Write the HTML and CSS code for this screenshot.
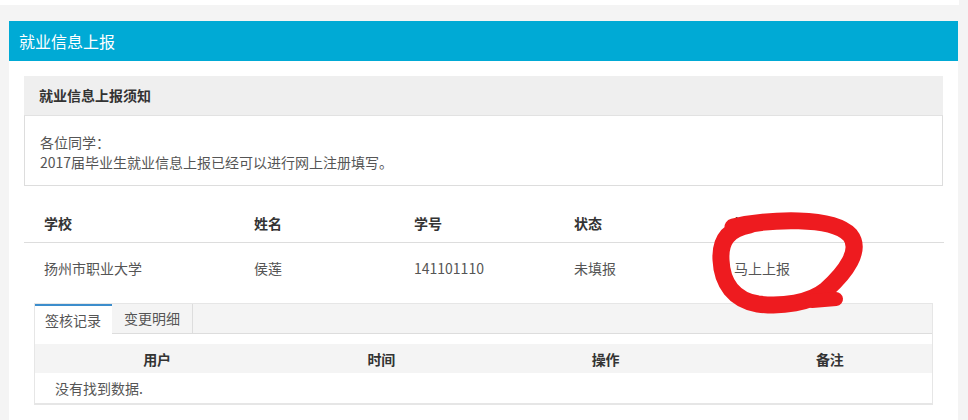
FILE: index.html
```html
<!DOCTYPE html>
<html lang="zh-CN">
<head>
    <meta charset="UTF-8">
    <meta name="viewport" content="width=device-width, initial-scale=1.0">
    <title>就业信息上报</title>
    <link rel="stylesheet" href="styles.css">
</head>
<body>
    <div class="top-strip"></div>

    <div class="panel">
        <div class="panel-heading">就业信息上报</div>
        <div class="panel-body">
            <!-- 上报须知 -->
            <div class="notice">
                <div class="notice-heading">就业信息上报须知</div>
                <div class="notice-body">
                    各位同学：<br>
                    2017届毕业生就业信息上报已经可以进行网上注册填写。
                </div>
            </div>

            <div class="report">
                <table class="info-table">
                    <colgroup>
                        <col style="width: 210px">
                        <col style="width: 160px">
                        <col style="width: 160px">
                        <col style="width: 160px">
                        <col style="width: 230px">
                    </colgroup>
                    <thead>
                        <tr>
                            <th>学校</th>
                            <th>姓名</th>
                            <th>学号</th>
                            <th>状态</th>
                            <th>操作</th>
                        </tr>
                    </thead>
                    <tbody>
                        <tr>
                            <td>扬州市职业大学</td>
                            <td>侯莲</td>
                            <td>141101110</td>
                            <td>未填报</td>
                            <td><a class="report-link" href="#">马上上报</a></td>
                        </tr>
                    </tbody>
                </table>

                <!-- 记录标签页 -->
                <div class="tabs">
                    <div class="tab-bar">
                        <div class="tab active">签核记录</div>
                        <div class="tab">变更明细</div>
                    </div>
                    <div class="tab-content">
                        <table class="log-table">
                            <thead>
                                <tr>
                                    <th>用户</th>
                                    <th>时间</th>
                                    <th>操作</th>
                                    <th>备注</th>
                                </tr>
                            </thead>
                            <tbody>
                                <tr>
                                    <td colspan="4" class="empty">没有找到数据.</td>
                                </tr>
                            </tbody>
                        </table>
                    </div>
                </div>

                <!-- 手绘圈注 -->
                <svg class="mark" width="180" height="120" viewBox="700 200 180 120">
                    <path d="M733 227 C 770 219, 832 216, 850 235 C 862 250, 846 272, 826 290 C 810 303, 782 307, 758 304 C 734 300, 722 283, 721 260 C 720 242, 727 229, 750 225"
                          fill="none" stroke="#ee1b1f" stroke-width="17" stroke-linecap="round" stroke-linejoin="round"/>
                    <path d="M812 301 L 836 299" fill="none" stroke="#ee1b1f" stroke-width="14" stroke-linecap="round"/>
                </svg>
            </div>
        </div>
    </div>
</body>
</html>
```

FILE: styles.css
```css
body {
    margin: 0;
    background-color: #f4f4f4;
    font-family: "Noto Sans CJK SC", "Noto Sans", sans-serif;
    font-size: 14px;
    color: #555;
}
.top-strip {
    width: 959px;
    height: 5px;
    background-color: #fff;
}
.panel {
    width: 949px;
    margin: 16px 0 0 9px;
    background-color: #fff;
    height: 399px;
}
.panel-heading {
    height: 40px;
    line-height: 40px;
    padding-left: 10px;
    background-color: #00aad5;
    color: #fff;
    font-size: 16px;
}
.panel-body {
    padding: 15px 15px 0;
}
.notice-heading {
    height: 39px;
    line-height: 39px;
    padding-left: 15px;
    background-color: #efefef;
    color: #333;
    font-weight: bold;
}
.notice-body {
    border: 1px solid #ddd;
    border-top-color: #e2e2e2;
    padding: 16px 15px 13px;
    line-height: 20px;
}
.report {
    position: relative;
    margin-top: 18px;
}
.info-table {
    width: 920px;
    table-layout: fixed;
    border-collapse: collapse;
}
.info-table th,
.info-table td {
    padding: 0 0 0 20px;
    text-align: left;
}
.info-table th {
    height: 38px;
    color: #333;
    font-weight: bold;
    border-bottom: 1px solid #ddd;
}
.info-table td {
    height: 50px;
}
.report-link {
    color: #555;
    text-decoration: none;
}
.tabs {
    margin: 10px 10px 0;
    border: 1px solid #e6e6e6;
}
.tab-bar {
    display: flex;
    height: 29px;
    background-color: #f4f4f4;
    border-bottom: 1px solid #ddd;
}
.tab {
    line-height: 29px;
    padding: 0 12px;
    border-right: 1px solid #ddd;
}
.tab.active {
    padding: 0 11px 0 10px;
    background-color: #fff;
    border-top: 2px solid #3c8dcc;
    border-right: none;
    line-height: 27px;
    height: 28px;
    margin-bottom: -1px;
    padding-top: 1px;
}
.tab-content {
    padding-top: 10px;
}
.log-table {
    width: 100%;
    table-layout: fixed;
    border-collapse: collapse;
}
.log-table th {
    height: 29px;
    padding: 0 0 0 20px;
    background-color: #f4f4f4;
    color: #333;
    font-weight: bold;
    text-align: center;
}
.log-table td {
    height: 30px;
    padding: 0 0 0 20px;
    border-bottom: 1px solid #e6e6e6;
}
.mark {
    position: absolute;
    left: 676px;
    top: -4px;
}
```
